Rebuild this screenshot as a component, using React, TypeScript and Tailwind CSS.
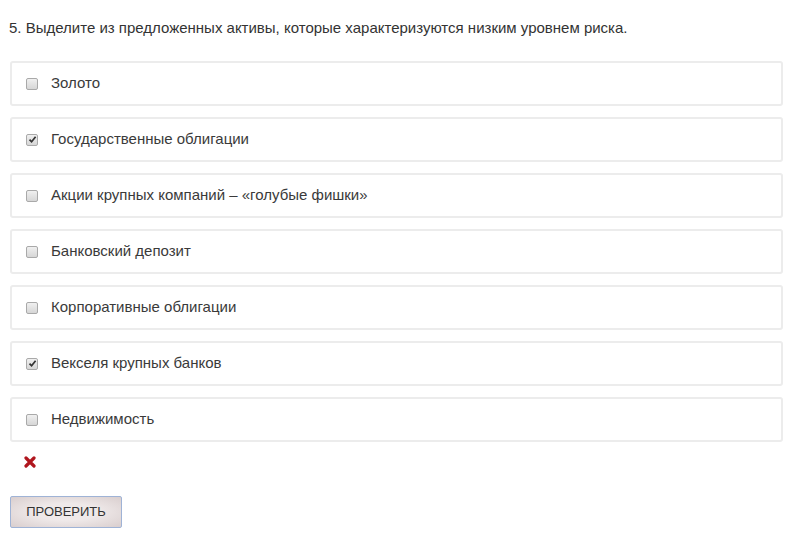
import React from "react";

const items: { label: string; checked: boolean }[] = [
  { label: "Золото", checked: false },
  { label: "Государственные облигации", checked: true },
  { label: "Акции крупных компаний – «голубые фишки»", checked: false },
  { label: "Банковский депозит", checked: false },
  { label: "Корпоративные облигации", checked: false },
  { label: "Векселя крупных банков", checked: true },
  { label: "Недвижимость", checked: false },
];

function Box({ checked }: { checked: boolean }) {
  return (
    <span className="w-[12px] h-[12px] rounded-[2px] border border-[#a9a9a9] bg-gradient-to-b from-[#f0f0f0] to-[#d6d6d6] flex items-center justify-center shrink-0">
      {checked && (
        <svg width="9" height="9" viewBox="0 0 9 9">
          <path d="M1.5 4.6 L3.6 6.8 L7.6 1.8" fill="none" stroke="#333" strokeWidth="1.7" />
        </svg>
      )}
    </span>
  );
}

export default function App() {
  return (
    <div
      className="w-[800px] h-[551px] bg-white pl-[9px] pr-[17px] pt-[19px] text-[#333]"
      style={{ fontFamily: '"Liberation Sans", Arial, sans-serif' }}
    >
      <p className="text-[15px] leading-[18px] mb-[24px]">
        5. Выделите из предложенных активы, которые характеризуются низким уровнем риска.
      </p>
      <div className="flex flex-col gap-[11px] pl-px">
        {items.map((it) => (
          <div
            key={it.label}
            className="h-[45px] border-2 border-[#ececec] rounded-[3px] flex items-center pl-[14px] gap-[13px]"
          >
            <Box checked={it.checked} />
            <span className="text-[15px] text-[#3a3a3a]">{it.label}</span>
          </div>
        ))}
      </div>
      <div className="h-[40px] flex items-center pl-[15px]">
        <svg width="12" height="12" viewBox="0 0 12 12">
          <path d="M2 2 L10 10 M10 2 L2 10" stroke="#b0161e" strokeWidth="3.2" strokeLinecap="round" />
        </svg>
      </div>
      <button
        className="mt-[14px] ml-px w-[112px] h-[32px] border border-[#9fb3d6] rounded-[2px] text-[13px] text-[#333] bg-[radial-gradient(ellipse_at_center,#efe9e9_40%,#d9cece_100%)]"
        style={{ fontFamily: '"Liberation Sans", Arial, sans-serif' }}
      >
        ПРОВЕРИТЬ
      </button>
    </div>
  );
}
